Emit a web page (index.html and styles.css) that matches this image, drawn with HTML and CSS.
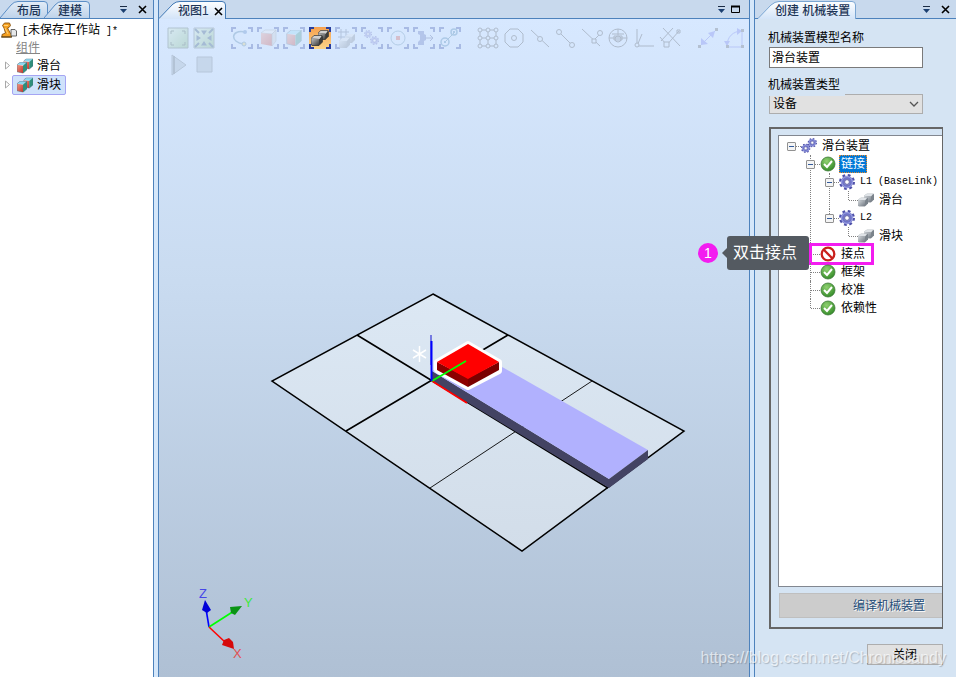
FILE: index.html
```html
<!DOCTYPE html>
<html lang="zh-CN">
<head>
<meta charset="utf-8">
<title>创建机械装置</title>
<link rel="stylesheet" href="styles.css">
</head>
<body>
<svg class="defs" aria-hidden="true">
  <defs>
    <linearGradient id="g-tab" x1="0" y1="0" x2="0" y2="1"><stop offset="0" stop-color="#fdfeff"/><stop offset="1" stop-color="#d3e4f8"/></linearGradient>
    <linearGradient id="g-tab-off" x1="0" y1="0" x2="0" y2="1"><stop offset="0" stop-color="#e2ecf7"/><stop offset="1" stop-color="#bfd3ea"/></linearGradient>
    <linearGradient id="g-gray" x1="0" y1="0" x2="1" y2="1"><stop offset="0" stop-color="#d6dade"/><stop offset="1" stop-color="#6f7780"/></linearGradient>
    <linearGradient id="g-dark" x1="0" y1="0" x2="1" y2="1"><stop offset="0" stop-color="#c4c4c4"/><stop offset="1" stop-color="#3a3a3a"/></linearGradient>
    <linearGradient id="g-red" x1="0" y1="0" x2="1" y2="1"><stop offset="0" stop-color="#f09a86"/><stop offset="1" stop-color="#c4352a"/></linearGradient>
    <linearGradient id="g-green" x1="0" y1="0" x2="1" y2="1"><stop offset="0" stop-color="#dbeed4"/><stop offset="1" stop-color="#6fae62"/></linearGradient>
    <radialGradient id="g-ok" cx=".4" cy=".3" r=".8"><stop offset="0" stop-color="#8fd070"/><stop offset="1" stop-color="#2a8420"/></radialGradient>
    <linearGradient id="g-floor" x1="0" y1="0" x2="0" y2="1"><stop offset="0" stop-color="#dce8f4"/><stop offset="1" stop-color="#d2dde9"/></linearGradient>
    <symbol id="corners" viewBox="0 0 22 22"><path d="M1 5V1h4M17 1h4v4M21 17v4h-4M5 21H1v-4" fill="none" stroke="#2a3f9c" stroke-width="2"/></symbol>
    <symbol id="box" viewBox="0 0 10 11"><path d="M0 2.500L3 0h7L7 3z" fill="#8fd8f0"/><path d="M0 2.500L6 3.500V11L0 9.500z" fill="url(#g-red)"/><path d="M6 3.500L10 0v7.500L6 11z" fill="#2e8f7a"/><path d="M0 2.500L3 0h7v7.500L6 11 0 9.500z" fill="none" stroke="#4a6a80" stroke-width=".5"/></symbol>
    <symbol id="graybox" viewBox="0 0 10 9"><path d="M0 2.500L3 0h6.500l.5 1v5L7 9H1L0 8z" fill="#7b838b"/><path d="M0 2.500L3 0h6.500L7 3z" fill="#dfe3e7"/><path d="M0 2.500L7 3v6H1L0 8z" fill="url(#g-gray)"/></symbol>
    <symbol id="darkbox" viewBox="0 0 12 11"><path d="M0 3.500L3 .5h8l.5 1.500v5L8 10.500H1L0 9z" fill="#3c3c3c"/><path d="M0 3.500L3 .5h8L8.500 4z" fill="#d0d0d0"/><path d="M0 3.500L8 4v6.500H1L0 9z" fill="url(#g-dark)"/><path d="M0 3.500L3 .5h8l.5 1.500v5L8 10.500H1L0 9z" fill="none" stroke="#2b2b2b" stroke-width=".6"/></symbol>
    <symbol id="part" viewBox="0 0 16 16"><use href="#box" x="6.500" y=".5" width="9.500" height="11"/><use href="#box" x="0" y="4" width="10" height="11.500"/></symbol>
    <symbol id="solid" viewBox="0 0 16 16"><use href="#graybox" x="6" y="1.500" width="10" height="9"/><use href="#graybox" x="0" y="5.500" width="10" height="9"/></symbol>
    <symbol id="gear" viewBox="0 0 16 16"><circle cx="8" cy="8" r="6.500" fill="none" stroke="#4e50a8" stroke-width="3" stroke-dasharray="2.600 2.500"/><circle cx="8" cy="8" r="4.400" fill="none" stroke="#6f74c8" stroke-width="3.600"/><circle cx="8" cy="8" r="5.400" fill="none" stroke="#aeb4ee" stroke-width=".8"/><circle cx="8" cy="8" r="2.400" fill="#fff" stroke="#3d3f90" stroke-width=".8"/></symbol>
    <symbol id="gears" viewBox="0 0 16 16"><use href="#gear" x="6.500" y="0" width="9.500" height="9.500"/><use href="#gear" x="0" y="5.500" width="9.500" height="9.500"/></symbol>
    <symbol id="ok" viewBox="0 0 16 16"><circle cx="8" cy="8" r="7" fill="url(#g-ok)" stroke="#3d7a38" stroke-width=".8"/><path d="M4 8l3 3 5-6" fill="none" stroke="#fff" stroke-width="2"/></symbol>
    <symbol id="no" viewBox="0 0 16 16"><circle cx="8" cy="8" r="6.300" fill="#fff" stroke="#c9201c" stroke-width="2.300"/><path d="M3.800 3.800l8.400 8.400" stroke="#c9201c" stroke-width="2.300"/></symbol>
    <symbol id="menu" viewBox="0 0 9 9"><path d="M1 1.500h7" stroke="#1b2c45"/><path d="M1 4h7L4.500 8z" fill="#1b3f70"/></symbol>
    <symbol id="close" viewBox="0 0 9 9"><path d="M1 1l7 7M8 1L1 8" stroke="#000" stroke-width="1.600"/></symbol>
    <symbol id="max" viewBox="0 0 9 9"><path d="M.5 1.500h8v6h-8z" fill="none" stroke="#000"/><path d="M0 1.500h9" stroke="#000" stroke-width="2"/></symbol>
  </defs>
</svg>

<div class="app">
  <aside class="pane layout-pane">
    <header class="bar">
      <button class="tab tab-first"><svg class="shape" viewBox="0 0 48 18"><path d="M0 18L11 5Q14 1.500 18 1.500H44Q47.500 1.500 47.500 5V18" fill="url(#g-tab-off)" stroke="#5b8ec6"/></svg><span>布局</span></button>
      <button class="tab tab-model"><svg class="shape" viewBox="0 0 46 18"><path d="M0 18L11 5Q14 1.500 18 1.500H42Q45.500 1.500 45.500 5V18" fill="url(#g-tab-off)" stroke="#5b8ec6"/></svg><span>建模</span></button>
      <span class="tools"><button aria-label="选项"><svg><use href="#menu"/></svg></button><button aria-label="关闭面板"><svg><use href="#close"/></svg></button></span>
    </header>
    <div class="station"><svg class="i16" viewBox="0 0 16 16"><path d="M1.500 3.500l2-2.500h5l1 2.500-1.500 2L6.500 6l3 5.500 1 1V15H1v-2.500l3.500-1.500L3 6z" fill="#f5a020" stroke="#8a5310" stroke-width=".9"/><path d="M3 3.500h4M4 6l3 6" fill="none" stroke="#ffd27a"/><path d="M10 7.500h4l1.500 1.500v5H10z" fill="#e6e8ea" stroke="#555" stroke-width=".9"/><path d="M0 15h11" stroke="#4f3a14"/></svg><span><span class="latin">[</span>未保存工作站<span class="latin">&nbsp;]*</span></span></div>
    <div class="group-name"><a href="#">组件</a></div>
    <ul class="parts">
      <li><svg class="arrow" viewBox="0 0 5 9"><path d="M.5 1v7l4-3.500z" fill="#fff" stroke="#a8a8a8"/></svg><button class="part"><svg class="i16"><use href="#part"/></svg>滑台</button></li>
      <li><svg class="arrow" viewBox="0 0 5 9"><path d="M.5 1v7l4-3.500z" fill="#fff" stroke="#a8a8a8"/></svg><button class="part chosen"><svg class="i16"><use href="#part"/></svg>滑块</button></li>
    </ul>
  </aside>

  <main class="pane view-pane">
    <header class="bar">
      <button class="tab tab-view"><svg class="shape" viewBox="0 0 67 19"><path d="M0 18.500L14 4Q17 1.500 21 1.500H63Q66.500 1.500 66.500 5V19H0z" fill="url(#g-tab)"/><path d="M0 18.500L14 4Q17 1.500 21 1.500H63Q66.500 1.500 66.500 5V19" fill="none" stroke="#3f78b5"/></svg><span>视图1</span><svg class="x"><use href="#close"/></svg></button>
      <span class="tools"><button aria-label="选项"><svg><use href="#menu"/></svg></button><button aria-label="最大化"><svg><use href="#max"/></svg></button></span>
    </header>
    <div class="canvas">
      <svg class="scene" viewBox="159 19 590 658" preserveAspectRatio="xMidYMin meet">
        <path d="M433 294L684 431 522 551 272 381z" fill="url(#g-floor)" stroke="#000" stroke-width="1.500"/>
        <g fill="none" stroke="#000"><path d="M357 335l251 153M508 335L346 431" stroke-width="1.600"/><path d="M592 381L430 488" stroke-width=".9"/></g>
        <path d="M432 371l177 108v9L432 381z" fill="#434363"/>
        <path d="M432 371l36-20 36 17 144 82-39 29z" fill="#b1b1fe"/>
        <path d="M609 479l39-29v9l-39 29z" fill="#434363"/>
        <path d="M432 381l35 22" stroke="#f00" stroke-width="1.800"/>
        <path d="M437 362l31-18 31 18v9l-31 16-31-17z" fill="#fff" stroke="#fff" stroke-width="6" stroke-linejoin="round"/>
        <path d="M437 362l31 16v9l-31-17z" fill="#8d0000"/><path d="M468 378l31-16v8l-31 17z" fill="#7a0000"/>
        <path d="M437 362l31-18 31 18-31 17z" fill="#f00"/>
        <path d="M432 381l34-20" stroke="#0f0" stroke-width="1.800"/>
        <path d="M431 335v30" stroke="#1010d0"/><path d="M431.500 341v40" stroke="#00f" stroke-width="2"/>
        <path d="M419.500 346v16M413 350l13 8M426 350l-13 8" stroke="#fff" stroke-width="1.500"/>
        <g stroke-width="1.600"><path d="M209 627l-3-18" stroke="#00f"/><path d="M209 627l25-16" stroke="#0f0"/><path d="M209 627l17 16" stroke="#f00"/></g>
        <path d="M205 600l6 10-4 3-5-3z" fill="#0000d8"/><path d="M242 606l-12 1 1 6 4 2z" fill="#0a9414"/><path d="M234 649l-12-4 2-5 5-2 4 4z" fill="#d60a0a"/>
        <g class="axis"><text x="199" y="598" fill="#4646e8">Z</text><text x="244" y="607" fill="#3fe83f">Y</text><text x="233" y="658" fill="#e05050">X</text></g>
      </svg>
      <div class="toolbar">
        <div class="set">
          <button aria-label="查看全部"><svg viewBox="0 0 22 22"><path d="M1 1h20v20H1z" fill="url(#g-green)" stroke="#4c6050"/><path d="M4 7V4h3M15 4h3v3M18 15v3h-3M7 18H4v-3" fill="none" stroke="#314a35"/></svg></button>
          <button aria-label="查看中心"><svg viewBox="0 0 22 22"><path d="M1 1h20v20H1z" fill="url(#g-green)" stroke="#5f6c75"/><path d="M8 3.500h6L11 8zM8 18.500h6L11 14zM3.500 8v6L8 11zM18.500 8v6L14 11z" fill="#1d3f62"/><path d="M2 2l4 4M20 2l-4 4M2 20l4-4M20 20l-4-4" stroke="#1d3f62" stroke-width="2"/></svg></button>
        </div>
        <div class="set">
          <button aria-label="选择曲线"><svg viewBox="0 0 22 22"><use href="#corners"/><path d="M14 5C-1 2-1 16 13 17" fill="none" stroke="#4379a0" stroke-width="1.500"/><circle cx="14" cy="5" r="2" fill="#4679bd"/><circle cx="13" cy="17" r="2" fill="#e2cc62" stroke="#4379a0"/></svg></button>
          <button aria-label="选择表面"><svg viewBox="0 0 22 22"><use href="#corners"/><path d="M4 6l4-3h11l-4 4z" fill="#eee" stroke="#888" stroke-width=".6"/><path d="M4 6l11 1v12L4 17z" fill="url(#g-red)"/><path d="M15 7l4-4v11l-4 5z" fill="#ccc" stroke="#888" stroke-width=".6"/></svg></button>
          <button aria-label="选择物体"><svg viewBox="0 0 22 22"><use href="#corners"/><use href="#box" x="3" y="3" width="16" height="16"/></svg></button>
          <button class="on" aria-label="选择部件"><svg viewBox="0 0 22 22"><use href="#corners"/><use href="#darkbox" x="9" y="3" width="11" height="10"/><use href="#darkbox" x="2" y="8" width="12" height="11"/></svg></button>
          <button aria-label="选择组"><svg viewBox="0 0 22 22"><use href="#corners"/><path d="M3 5h11M3 10h8M6 2v11M11 2v7" stroke="#536081"/><use href="#graybox" x="10" y="7" width="10" height="9"/><use href="#graybox" x="4" y="11" width="11" height="10"/></svg></button>
          <button aria-label="选择机械装置"><svg viewBox="0 0 22 22"><use href="#corners"/><use href="#gear" x="3" y="3" width="8" height="8"/><use href="#gear" x="9" y="9" width="9" height="9"/></svg></button>
          <button aria-label="选择目标点"><svg viewBox="0 0 22 22"><use href="#corners"/><circle cx="11" cy="11" r="7" fill="none" stroke="#5584a5"/><path d="M9 9h4v4H9z" fill="#d34c40"/></svg></button>
          <button aria-label="选择移动指令"><svg viewBox="0 0 22 22"><use href="#corners"/><path d="M5 4h6v3l2 1v5l-2 1v4H5v-3l2-2V8L5 7z" fill="#5366b5"/><path d="M12 11h7M17 8l3 3-3 3" fill="none" stroke="#485690"/></svg></button>
          <button aria-label="选择路径"><svg viewBox="0 0 22 22"><use href="#corners"/><path d="M6 15L16 5" stroke="#3d718d"/><g fill="none" stroke="#3979a8" stroke-width="1.500"><circle cx="15" cy="5" r="3"/><circle cx="6" cy="15" r="4"/></g><path d="M14 4h2v2h-2zM5 14h2v2H5z" fill="#3979a8"/></svg></button>
        </div>
        <div class="set mono">
          <button aria-label="捕捉对象"><svg viewBox="0 0 22 22"><path d="M3 3h16v16H3zM11 3v16M3 11h16"/><g class="dot"><circle cx="3" cy="3" r="2"/><circle cx="11" cy="3" r="2"/><circle cx="19" cy="3" r="2"/><circle cx="3" cy="11" r="2"/><circle cx="11" cy="11" r="2"/><circle cx="19" cy="11" r="2"/><circle cx="3" cy="19" r="2"/><circle cx="11" cy="19" r="2"/><circle cx="19" cy="19" r="2"/></g></svg></button>
          <button aria-label="捕捉中心"><svg viewBox="0 0 22 22"><path d="M7 2h8l5 5v8l-5 5H7l-5-5V7z"/><circle cx="11" cy="11" r="2.500"/></svg></button>
          <button aria-label="捕捉中点"><svg viewBox="0 0 22 22"><path d="M2 3l18 17"/><circle class="dot" cx="11" cy="12" r="2.500"/></svg></button>
          <button aria-label="捕捉末端"><svg viewBox="0 0 22 22"><path d="M4 5l13 13"/><g class="dot"><circle cx="4" cy="5" r="2.500"/><circle cx="17" cy="18" r="2.500"/></g></svg></button>
          <button aria-label="捕捉边缘"><svg viewBox="0 0 22 22"><path d="M1 2l18 17M13 13l6-6"/><path class="dot" d="M11 12h4v4h-4z"/><circle class="dot" cx="19" cy="6" r="2.500"/></svg></button>
          <button aria-label="捕捉重心"><svg viewBox="0 0 22 22"><circle cx="11" cy="11" r="9"/><path d="M2 11h18M5 7h12M11 2v6M7 13V9h8v4z"/><circle cx="11" cy="12" r="3"/></svg></button>
          <button aria-label="捕捉本地原点"><svg viewBox="0 0 22 22"><path d="M4 2v17h17M4 19l5-12"/><circle class="dot" cx="4" cy="18" r="2"/></svg></button>
          <button aria-label="捕捉网格"><svg viewBox="0 0 22 22"><path d="M4 1l17 18M2 14L14 1M6 20L20 4M1 10l5 6"/><path class="dot" d="M5 15h5v5H5z"/><path d="M18 3h3v3h-3z"/></svg></button>
        </div>
        <div class="set">
          <button aria-label="点到点"><svg viewBox="0 0 22 22"><path d="M4 18L18 4" stroke="#6a70ea"/><path d="M11 6l7-2-2 7zM4 11v7l7-1z" fill="#6a70ea"/><path d="M1 18h3v3H1zM18 1h3v3h-3z" fill="#555"/></svg></button>
          <button aria-label="角度"><svg viewBox="0 0 22 22"><path d="M19 4v16H4M4 19C4 10 10 4 19 4" fill="none" stroke="#6a70ea"/><path d="M1 14l3 5 3-5zM14 1l5 3-5 4z" fill="#6a70ea"/><path d="M3 18h3v3H3zM18 2h3v3h-3zM18 18h3v3h-3z" fill="#555"/></svg></button>
        </div>
      </div>
      <div class="toolbar">
        <div class="set">
          <button aria-label="播放"><svg viewBox="0 0 22 22"><path d="M5 1l14 10L5 21z" fill="#9fb0be" stroke="#66727d"/><path d="M7 2v18" stroke="#56616a" stroke-width="2"/></svg></button>
          <button aria-label="停止"><svg viewBox="0 0 22 22"><path d="M4 3h15v15H4z" fill="#9fb0be" stroke="#66727d"/></svg></button>
        </div>
      </div>
    </div>
  </main>

  <aside class="pane device-pane">
    <header class="bar">
      <button class="tab tab-device"><svg class="shape" viewBox="0 0 98 19"><path d="M0 18.500L13 5Q17 1.500 21 1.500H94Q97.500 1.500 97.500 5V19H0z" fill="url(#g-tab)"/><path d="M0 18.500L13 5Q17 1.500 21 1.500H94Q97.500 1.500 97.500 5V19" fill="none" stroke="#7ba6d3"/></svg><span>创建 机械装置</span></button>
      <span class="tools"><button aria-label="选项"><svg><use href="#menu"/></svg></button><button aria-label="关闭面板"><svg><use href="#close"/></svg></button></span>
    </header>
    <form class="form">
      <label for="name">机械装置模型名称</label>
      <input id="name" type="text" value="滑台装置">
      <label class="type-label" for="type">机械装置类型</label>
      <div class="select"><select id="type"><option>设备</option></select><svg viewBox="0 0 10 6"><path d="M1 1l4 4 4-4" fill="none" stroke="#555" stroke-width="1.300"/></svg></div>
      <div class="model">
        <ul class="tree">
          <li><div class="row"><button class="toggle" type="button" aria-label="折叠"></button><svg class="i16"><use href="#gears"/></svg><span class="name">滑台装置</span></div>
            <ul>
              <li><div class="row"><button class="toggle" type="button" aria-label="折叠"></button><svg class="i16"><use href="#ok"/></svg><span class="name current">链接</span></div>
                <ul>
                  <li><div class="row"><button class="toggle" type="button" aria-label="折叠"></button><svg class="i16"><use href="#gear"/></svg><span class="name latin">L1 (BaseLink)</span></div>
                    <ul><li><div class="row"><svg class="i16"><use href="#solid"/></svg><span class="name">滑台</span></div></li></ul></li>
                  <li><div class="row"><button class="toggle" type="button" aria-label="折叠"></button><svg class="i16"><use href="#gear"/></svg><span class="name latin">L2</span></div>
                    <ul><li><div class="row"><svg class="i16"><use href="#solid"/></svg><span class="name">滑块</span></div></li></ul></li>
                </ul></li>
              <li><div class="row"><svg class="i16"><use href="#no"/></svg><span class="name">接点</span><span class="frame"></span><span class="hint"><span class="step">1</span><span class="tip">双击接点</span></span></div></li>
              <li><div class="row"><svg class="i16"><use href="#ok"/></svg><span class="name">框架</span></div></li>
              <li><div class="row"><svg class="i16"><use href="#ok"/></svg><span class="name">校准</span></div></li>
              <li><div class="row"><svg class="i16"><use href="#ok"/></svg><span class="name">依赖性</span></div></li>
            </ul></li>
        </ul>
        <button class="compile" type="button" disabled>编译机械装置</button>
      </div>
      <button class="dismiss" type="button">关闭</button>
    </form>
  </aside>
  <span class="watermark">https://blog.csdn.net/Chroniccandy</span>
</div>
</body>
</html>
```
FILE: styles.css
```css
* { box-sizing: border-box; }
body {
  margin: 0;
  font: 12px/18px "Liberation Sans", "Noto Sans CJK SC", sans-serif;
  color: #000;
}
button, input, select { font: inherit; color: inherit; margin: 0; padding: 0; border: 0; background: none; }
ul { list-style: none; margin: 0; padding: 0; }
svg { display: block; flex: none; }
.defs { position: absolute; width: 0; height: 0; }
.i16 { width: 16px; height: 16px; }
.latin { font-family: "Liberation Mono", monospace; font-size: 10px; }

.app { position: relative; display: flex; gap: 4px; height: 100vh; background: #d5e7fa; overflow: hidden; }
.pane { display: flex; flex-direction: column; min-width: 0; border: solid #4d82bc; border-width: 0 1px; }
.layout-pane { flex: 0 0 154px; border-left: 0; background: #fff; }
.view-pane { flex: 1; }
.device-pane { flex: 0 0 202px; border-right: 0; background: #d5e4f3; }

.bar { display: flex; height: 19px; flex: none; background: #c8d9ed; border-bottom: 1px solid #4d82bc; }
.tab { position: relative; flex: none; display: flex; align-items: center; height: 19px; padding-top: 3px; color: #1d3557; font-weight: 500; line-height: 16px; white-space: nowrap; }
.tab span { position: relative; }
.shape { position: absolute; inset: 0; width: 100%; height: 100%; }
.tab-first { width: 48px; height: 18px; padding-left: 17px; }
.tab-model { width: 46px; height: 18px; padding-left: 14px; margin-left: -4px; }
.tab-view { width: 67px; padding-left: 19px; gap: 5px; }
.tab-view .x { position: relative; width: 9px; height: 9px; }
.tab-device { width: 98px; padding-left: 17px; margin-left: 3px; }
.tools { display: flex; align-items: center; gap: 10px; margin-left: auto; padding-right: 6px; }
.tools button, .tools svg { width: 9px; height: 9px; }
.view-pane .tools { gap: 5px; padding-right: 9px; }

.station { display: flex; align-items: center; gap: 5px; padding-left: 1px; height: 22px; }
.station > span { padding-top: 2px; }
.group-name { padding-left: 16px; height: 15px; line-height: 15px; }
.group-name a { color: #858585; }
.parts li { display: flex; align-items: center; height: 19px; padding-left: 5px; gap: 2px; }
.arrow { width: 5px; height: 9px; }
.part { display: flex; align-items: center; gap: 4px; height: 20px; padding: 0 4px; border: 1px solid transparent; border-radius: 2px; }
.chosen { background: #cfe2fb; border-color: #a5a5f3; }

.canvas { position: relative; flex: 1; padding: 6px 0 0 6px; background: linear-gradient(#d7e8ff, #c9dbf0 40%, #afc0d4); }
.scene { position: absolute; inset: 0; width: 100%; height: 100%; }
.axis { font: 13px "Liberation Sans", sans-serif; }
.toolbar { position: relative; display: flex; gap: 12px; height: 27px; }
.set { display: flex; }
.set button { width: 26px; height: 26px; padding: 2px; opacity: .26; }
.set svg { width: 22px; height: 22px; }
.set .on { opacity: 1; }
.on svg { background: linear-gradient(#f6a04e, #fbd58a); }
.mono svg { fill: none; stroke: #444; }
.dot { fill: #d7e8fc; }

.form { flex: 1; display: flex; flex-direction: column; padding: 9px 13px 12px 14px; }
.form label { width: 108px; height: 19px; line-height: 20px; margin-left: -1px; }
.form input { height: 21px; min-width: 0; margin-right: 20px; padding: 0 2px 2px; border: 1px solid #7a7a7a; background: #fff; }
.form .type-label { position: relative; z-index: 1; width: 77px; height: 21px; margin-top: 7px; margin-bottom: -2px; background: #d5e4f3; }
.select { position: relative; margin-right: 20px; }
.select select { display: block; appearance: none; width: 100%; height: 20px; padding: 0 3px; border: 1px solid #adadad; background: #e1e1e1; }
.select svg { position: absolute; right: 4px; top: 7px; width: 10px; height: 6px; }
.model { flex: 1; display: flex; flex-direction: column; gap: 6px; margin-top: 13px; padding: 6px 0 9px 7px; border: 2px solid #666; border-right-width: 1px; }
.tree { flex: 1; padding: 1px 0 0 3px; background: #fff; border: 1px solid #828790; border-right: 0; }
.tree ul { padding-left: 19px; }
.tree li { position: relative; }
.tree ul > li::before { content: ""; position: absolute; left: 9px; top: 0; height: 100%; border-left: 1px dotted #808080; }
.tree ul > li:last-child::before { height: 9px; }
.row { position: relative; display: flex; align-items: center; height: 18px; padding-left: 19px; white-space: nowrap; }
.row::before { content: ""; position: absolute; left: 10px; top: 9px; width: 9px; border-top: 1px dotted #808080; }
.toggle { position: absolute; left: 5px; top: 5px; z-index: 1; width: 9px; height: 9px; border: 1px solid #919191; border-radius: 1px; background: linear-gradient(#335b9c, #335b9c) center / 5px 1px no-repeat #f4f4f4; }
.name { margin-left: 3px; padding: 0 2px; }
.current { color: #fff; background: #0078d7; outline: 1px dotted #e88a2e; outline-offset: -1px; }
.frame { position: absolute; left: 8px; top: -2px; width: 65px; height: 22px; border: 3px solid #f31cf0; }
.hint { position: absolute; right: calc(100% - 8px); top: -9px; z-index: 2; display: flex; align-items: center; gap: 9px; color: #fff; font-size: 16px; }
.step { width: 20px; height: 20px; border-radius: 50%; background: #f31cf0; text-align: center; line-height: 20px; font-size: 14px; }
.tip { position: relative; height: 34px; padding: 0 12px 0 6px; line-height: 34px; border-radius: 3px; background: #545a61; }
.tip::before { content: ""; position: absolute; left: -5px; top: 12px; border: solid transparent; border-width: 5px 5px 5px 0; border-right-color: #545a61; }
.hint { right: auto; left: -103px; }
.compile { height: 25px; margin-left: 1px; padding-right: 17px; text-align: right; color: #1f4e79; background: #ccc; border: 1px solid #bfbfbf; border-right: 0; text-shadow: 1px 1px #fff; }
.dismiss { align-self: flex-end; width: 76px; height: 21px; margin-top: 15px; line-height: 18px; border: 1px solid #adadad; background: #e1e1e1; }
.watermark { position: absolute; right: 10px; bottom: 10px; z-index: 3; font-size: 16px; color: #ffffffa8; text-shadow: 1px 1px 1px #0003; pointer-events: none; }
```
